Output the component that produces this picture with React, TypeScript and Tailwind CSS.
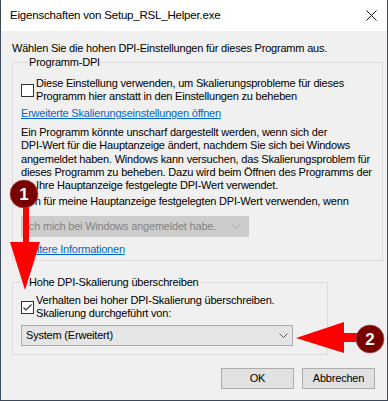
import * as React from 'react';

const Chevron: React.FC<{ color: string }> = ({ color }) => (
  <svg width="9" height="5" viewBox="0 0 9 5" fill="none">
    <path d="M0.5 0.5 L4.5 4.5 L8.5 0.5" stroke={color} strokeWidth="1" />
  </svg>
);

const Checkbox: React.FC<{ checked?: boolean }> = ({ checked }) => (
  <div className="flex h-[13px] w-[13px] shrink-0 items-center justify-center border border-[#333333] bg-white">
    {checked && (
      <svg width="11" height="11" viewBox="0 0 11 11" fill="none">
        <path d="M1.5 5.5 L4 8 L9.5 2.5" stroke="#333333" strokeWidth="1.2" />
      </svg>
    )}
  </div>
);

const Annotations: React.FC = () => (
  <svg className="pointer-events-none absolute inset-0" width="388" height="401" viewBox="0 0 388 401">
    {/* arrow 1 */}
    <rect x="22" y="200" width="6" height="43" fill="#ff0000" />
    <polygon points="9,242 39,242 24,290" fill="#ff0000" />
    {/* arrow 2 */}
    <rect x="342" y="333" width="16" height="9" fill="#ff0000" />
    <polygon points="295,338 343,322 343,353" fill="#ff0000" />
    <circle cx="23" cy="194" r="14" fill="#7a0000" stroke="#b06060" strokeWidth="0.6" />
    <text x="23" y="200" textAnchor="middle" fill="#ffffff" fontSize="17" fontWeight="700" fontFamily="Liberation Sans, sans-serif">
      1
    </text>
    <circle cx="369" cy="339" r="14" fill="#7a0000" stroke="#b06060" strokeWidth="0.6" />
    <text x="369" y="345" textAnchor="middle" fill="#ffffff" fontSize="17" fontWeight="700" fontFamily="Liberation Sans, sans-serif">
      2
    </text>
  </svg>
);

const App: React.FC = () => {
  return (
    <div className="relative flex h-[401px] w-[388px] flex-col overflow-hidden border-x border-b border-[#3b4a5a] bg-[#f0f0f0] font-['Liberation_Sans',Arial,sans-serif] text-[11px] leading-[13px] tracking-[-0.2px] text-black">
      <div className="flex h-[31px] shrink-0 items-center justify-between bg-white pl-[9px] pr-[10px]">
        <span className="text-[11.5px]">Eigenschaften von Setup_RSL_Helper.exe</span>
        <svg width="11" height="11" viewBox="0 0 11 11" fill="none">
          <path d="M0.5 0.5 L10.5 10.5 M10.5 0.5 L0.5 10.5" stroke="#111111" strokeWidth="1" />
        </svg>
      </div>

      <div className="flex flex-col pl-[11px] pr-[4px] pt-[11px]">
        <p className="whitespace-nowrap">Wählen Sie die hohen DPI-Einstellungen für dieses Programm aus.</p>

        <fieldset className="mt-[1px] border border-[#dcdcdc] pb-[4px] pl-[8px]">
          <legend className="ml-[7px] px-[1px]">Programm-DPI</legend>
          <div className="mt-[8px] flex items-center gap-[2px]">
            <Checkbox />
            <div className="whitespace-nowrap">
              Diese Einstellung verwenden, um Skalierungsprobleme für dieses
              <br />
              Programm hier anstatt in den Einstellungen zu beheben
            </div>
          </div>
          <a className="mt-[4px] block w-fit whitespace-nowrap text-[#0066cc] underline underline-offset-[1px]">
            Erweiterte Skalierungseinstellungen öffnen
          </a>
          <p className="mt-[6px] whitespace-nowrap leading-[13.25px]">
            Ein Programm könnte unscharf dargestellt werden, wenn sich der
            <br />
            DPI-Wert für die Hauptanzeige ändert, nachdem Sie sich bei Windows
            <br />
            angemeldet haben. Windows kann versuchen, das Skalierungsproblem für
            <br />
            dieses Programm zu beheben. Dazu wird beim Öffnen des Programms der
            <br />
            für Ihre Hauptanzeige festgelegte DPI-Wert verwendet.
          </p>
          <p className="mt-[3px] whitespace-nowrap">Den für meine Hauptanzeige festgelegten DPI-Wert verwenden, wenn</p>
          <div className="mt-[8px] flex h-[21px] w-[228px] items-center justify-between border border-[#cccccc] bg-[#cccccc] pl-[4px] pr-[7px] text-[#838383]">
            <span className="whitespace-nowrap">Ich mich bei Windows angemeldet habe.</span>
            <Chevron color="#a8a8a8" />
          </div>
          <a className="mt-[6px] block w-fit whitespace-nowrap text-[#0066cc] underline underline-offset-[1px]">
            Weitere Informationen
          </a>
        </fieldset>

        <fieldset className="mt-[15px] w-[316px] border border-[#dcdcdc] pb-[8px] pl-[8px]">
          <legend className="ml-[7px] px-[1px]">Hohe DPI-Skalierung überschreiben</legend>
          <div className="mt-[5px] flex items-center gap-[2px]">
            <Checkbox checked />
            <div className="whitespace-nowrap">
              Verhalten bei hoher DPI-Skalierung überschreiben.
              <br />
              Skalierung durchgeführt von:
            </div>
          </div>
          <div className="mt-[5px] flex h-[21px] w-[272px] items-center justify-between border border-[#adadad] bg-[#e5e5e5] pl-[4px] pr-[4px]">
            <span className="whitespace-nowrap">System (Erweitert)</span>
            <Chevron color="#555555" />
          </div>
        </fieldset>

        <div className="mt-[13px] flex justify-end gap-[8px] pr-[8px]">
          <button className="h-[21px] w-[73px] border border-[#adadad] bg-[#e1e1e1]">OK</button>
          <button className="h-[21px] w-[73px] border border-[#adadad] bg-[#e1e1e1]">Abbrechen</button>
        </div>
      </div>

      <Annotations />
    </div>
  );
};

export default App;
